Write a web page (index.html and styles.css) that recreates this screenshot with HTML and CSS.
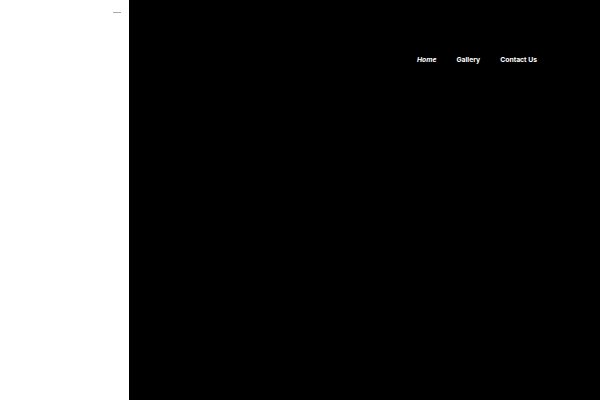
FILE: index.html
```html
<!DOCTYPE html>
<html>
<head>
<meta charset="utf-8">
<link rel="stylesheet" href="styles.css">
</head>
<body>
<div class="page">
  <aside class="side">
    <div class="side-bar"></div>
  </aside>
  <main class="main">
    <nav class="nav">
      <a class="nav-link active">Home</a>
      <a class="nav-link">Gallery</a>
      <a class="nav-link">Contact Us</a>
    </nav>
  </main>
</div>
</body>
</html>
```
FILE: styles.css
```css
html, body { margin: 0; padding: 0; height: 100%; }
body { font-family: "Inter", "Open Sans", sans-serif; }
.page { display: flex; height: 400px; width: 600px; }
.side { width: 129px; background: #fff; display: flex; justify-content: flex-end; padding: 12px 8px 0 0; box-sizing: border-box; }
.side-bar { width: 8px; height: 1px; background: #aaa; }
.main { flex: 1; background: #000; padding: 55px 63px 0 0; box-sizing: border-box; }
.nav { display: flex; justify-content: flex-end; gap: 20px; }
.nav-link { color: #fff; font-size: 6.8px; font-weight: 700; line-height: 10px; }
.nav-link.active { font-style: italic; }
```
